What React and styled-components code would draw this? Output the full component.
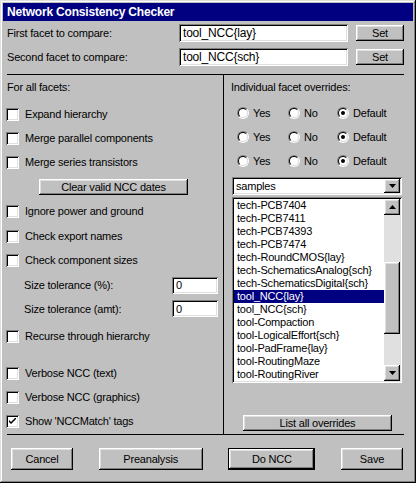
import React from "react";
import styled, { createGlobalStyle, css } from "styled-components";

const Global = createGlobalStyle`
  html, body { margin: 0; padding: 0; background: #c0c0c0; }
  body {
    font-family: "Liberation Sans", Arial, sans-serif;
    font-size: 11px;
    letter-spacing: -0.2px;
    color: #000;
  }
  * { box-sizing: border-box; }
`;

const raised = css`
  background: #c0c0c0;
  box-shadow: inset -1px -1px #000, inset 1px 1px #fff, inset -2px -2px #808080,
    inset 2px 2px #dfdfdf;
`;
const sunken = css`
  background: #fff;
  box-shadow: inset 1px 1px #808080, inset -1px -1px #fff, inset 2px 2px #000,
    inset -2px -2px #dfdfdf;
`;

const Window = styled.div`
  width: 416px;
  height: 483px;
  padding: 3px;
  background: #c0c0c0;
  box-shadow: inset -1px -1px #000, inset 1px 1px #dfdfdf, inset -2px -2px #808080,
    inset 2px 2px #fff;
  display: flex;
  flex-direction: column;
`;

const TitleBar = styled.div`
  height: 18px;
  background: #000080;
  color: #fff;
  font-weight: bold;
  font-size: 12px;
  padding-left: 4px;
  display: flex;
  align-items: center;
`;

const Body = styled.div`
  padding: 0 9px 0 4px;
  display: flex;
  flex-direction: column;
`;

const FacetRow = styled.div`
  display: flex;
  align-items: center;
  height: 18px;
  margin-top: ${(p) => p.$mt}px;
`;

const FacetLabel = styled.div`
  width: 172px;
`;

const TextField = styled.div`
  ${sunken};
  width: ${(p) => p.$w}px;
  height: ${(p) => p.$h}px;
  padding-left: 4px;
  display: flex;
  align-items: center;
  white-space: nowrap;
  overflow: hidden;
  font-size: ${(p) => p.$fs || 11}px;
`;

const Button = styled.div`
  ${raised};
  width: ${(p) => p.$w}px;
  height: ${(p) => p.$h}px;
  margin-left: ${(p) => p.$ml || 0}px;
  display: flex;
  align-items: center;
  justify-content: center;
  white-space: nowrap;
  ${(p) =>
    p.$default &&
    css`
      box-shadow: inset 0 0 0 1px #000, inset -2px -2px #000, inset 2px 2px #fff,
        inset -3px -3px #808080, inset 3px 3px #dfdfdf;
    `}
`;

const Panel = styled.div`
  margin-top: 8px;
  width: 397px;
  height: 361px;
  border-top: 1px solid #000;
  border-bottom: 1px solid #000;
  display: grid;
  grid-template-columns: 216px 1px 180px;
`;

const Divider = styled.div`
  background: #000;
`;

const Column = styled.div`
  display: flex;
  flex-direction: column;
  padding-left: ${(p) => p.$pl || 0}px;
`;

const Row = styled.div`
  display: flex;
  align-items: center;
  height: ${(p) => p.$h || 24}px;
  margin-top: ${(p) => p.$mt || 0}px;
  padding-left: ${(p) => p.$pl || 0}px;
  white-space: nowrap;
`;

const CheckBox = styled.div`
  ${sunken};
  width: 13px;
  height: 13px;
  margin-left: -1px;
  margin-right: 6px;
  display: flex;
  align-items: center;
  justify-content: center;
`;

const ToleranceLabel = styled.div`
  width: 148px;
`;

const RadioRow = styled.div`
  display: grid;
  grid-template-columns: 51px 49px auto;
  align-items: center;
  height: 24px;
  margin-top: ${(p) => p.$mt || 0}px;
  padding-left: 13px;
`;

const RadioOption = styled.div`
  display: flex;
  align-items: center;
  gap: 4px;
`;

const RadioOuter = styled.div`
  width: 12px;
  height: 12px;
  border-radius: 50%;
  border: 1px solid;
  border-color: #808080 #fff #fff #808080;
  display: flex;
`;

const RadioInner = styled.div`
  flex: 1;
  border-radius: 50%;
  border: 1px solid;
  border-color: #000 #dfdfdf #dfdfdf #000;
  background: #fff;
  display: flex;
  align-items: center;
  justify-content: center;
`;

const RadioDot = styled.div`
  width: 4px;
  height: 4px;
  border-radius: 50%;
  background: #000;
`;

const Dropdown = styled.div`
  ${sunken};
  width: 170px;
  height: 18px;
  margin-top: 4px;
  margin-left: 8px;
  padding: 2px;
  display: flex;
  align-items: center;
`;

const DropText = styled.div`
  flex: 1;
  padding-left: 2px;
`;

const ArrowButton = styled.div`
  ${raised};
  width: 16px;
  height: ${(p) => p.$h || 16}px;
  flex: none;
  display: flex;
  align-items: center;
  justify-content: center;
`;

const ListBox = styled.div`
  ${sunken};
  width: 170px;
  height: 186px;
  margin-top: 2px;
  margin-left: 8px;
  padding: 2px;
  display: flex;
`;

const Items = styled.div`
  flex: 1;
  display: flex;
  flex-direction: column;
  overflow: hidden;
`;

const Item = styled.div`
  height: 13px;
  line-height: 13px;
  padding-left: 3px;
  white-space: nowrap;
  background: ${(p) => (p.$selected ? "#000080" : "transparent")};
  color: ${(p) => (p.$selected ? "#fff" : "#000")};
`;

const ScrollBar = styled.div`
  width: 16px;
  display: flex;
  flex-direction: column;
`;

const Track = styled.div`
  flex: 1;
  background: #e0e0e0;
  display: flex;
  flex-direction: column;
`;

const Thumb = styled.div`
  ${raised};
  margin-top: 47px;
  height: 72px;
`;

const BottomBar = styled.div`
  margin-top: 13px;
  height: 22px;
  padding: 0 1px 0 4px;
  display: flex;
  justify-content: space-between;
`;

const Triangle = ({ down }) => (
  <svg width="7" height="4" viewBox="0 0 7 4">
    <polygon points={down ? "0,0 7,0 3.5,4" : "0,4 7,4 3.5,0"} fill="#000" />
  </svg>
);

const Check = ({ checked, children, mt }) => (
  <Row $mt={mt}>
    <CheckBox>
      {checked && (
        <svg width="7" height="7" viewBox="0 0 7 7">
          <path d="M0 2 L0 4 L2 6 L7 1 L7 -1 L2 4 Z" fill="#000" />
        </svg>
      )}
    </CheckBox>
    {children}
  </Row>
);

const Radio = ({ on, label }) => (
  <RadioOption>
    <RadioOuter>
      <RadioInner>{on && <RadioDot />}</RadioInner>
    </RadioOuter>
    {label}
  </RadioOption>
);

const RadioSet = ({ mt }) => (
  <RadioRow $mt={mt}>
    <Radio label="Yes" />
    <Radio label="No" />
    <Radio on label="Default" />
  </RadioRow>
);

const items = [
  "tech-PCB7404",
  "tech-PCB7411",
  "tech-PCB74393",
  "tech-PCB7474",
  "tech-RoundCMOS{lay}",
  "tech-SchematicsAnalog{sch}",
  "tech-SchematicsDigital{sch}",
  "tool_NCC{lay}",
  "tool_NCC{sch}",
  "tool-Compaction",
  "tool-LogicalEffort{sch}",
  "tool-PadFrame{lay}",
  "tool-RoutingMaze",
  "tool-RoutingRiver",
];

export default function App() {
  return (
    <>
      <Global />
      <Window>
        <TitleBar>Network Consistency Checker</TitleBar>
        <Body>
          <FacetRow $mt={3}>
            <FacetLabel>First facet to compare:</FacetLabel>
            <TextField $w={169} $h={18} $fs={12}>tool_NCC{"{lay}"}</TextField>
            <Button $w={48} $h={16} $ml={8}>Set</Button>
          </FacetRow>
          <FacetRow $mt={6}>
            <FacetLabel>Second facet to compare:</FacetLabel>
            <TextField $w={169} $h={18} $fs={12}>tool_NCC{"{sch}"}</TextField>
            <Button $w={48} $h={16} $ml={8}>Set</Button>
          </FacetRow>

          <Panel>
            <Column>
              <Row>For all facets:</Row>
              <Check mt={3}>Expand hierarchy</Check>
              <Check>Merge parallel components</Check>
              <Check>Merge series transistors</Check>
              <Row $mt={1} $pl={32}>
                <Button $w={149} $h={16}>Clear valid NCC dates</Button>
              </Row>
              <Check>Ignore power and ground</Check>
              <Check mt={1}>Check export names</Check>
              <Check>Check component sizes</Check>
              <Row $mt={1} $pl={17}>
                <ToleranceLabel>Size tolerance (%):</ToleranceLabel>
                <TextField $w={46} $h={17}>0</TextField>
              </Row>
              <Row $h={23} $pl={17}>
                <ToleranceLabel>Size tolerance (amt):</ToleranceLabel>
                <TextField $w={46} $h={17}>0</TextField>
              </Row>
              <Check mt={4}>Recurse through hierarchy</Check>
              <Check mt={13}>Verbose NCC (text)</Check>
              <Check>Verbose NCC (graphics)</Check>
              <Check checked>Show 'NCCMatch' tags</Check>
            </Column>
            <Divider />
            <Column>
              <Row $pl={7}>Individual facet overrides:</Row>
              <RadioSet mt={2} />
              <RadioSet />
              <RadioSet />
              <Dropdown>
                <DropText>samples</DropText>
                <ArrowButton $h={14}>
                  <Triangle down />
                </ArrowButton>
              </Dropdown>
              <ListBox>
                <Items>
                  {items.map((it) => (
                    <Item key={it} $selected={it === "tool_NCC{lay}"}>
                      {it}
                    </Item>
                  ))}
                </Items>
                <ScrollBar>
                  <ArrowButton>
                    <Triangle />
                  </ArrowButton>
                  <Track>
                    <Thumb />
                  </Track>
                  <ArrowButton>
                    <Triangle down />
                  </ArrowButton>
                </ScrollBar>
              </ListBox>
              <Row $h={16} $mt={32} $pl={19}>
                <Button $w={149} $h={16}>List all overrides</Button>
              </Row>
            </Column>
          </Panel>

          <BottomBar>
            <Button $w={62} $h={22}>Cancel</Button>
            <Button $w={104} $h={22}>Preanalysis</Button>
            <Button $w={87} $h={22} $default>Do NCC</Button>
            <Button $w={62} $h={22}>Save</Button>
          </BottomBar>
        </Body>
      </Window>
    </>
  );
}
